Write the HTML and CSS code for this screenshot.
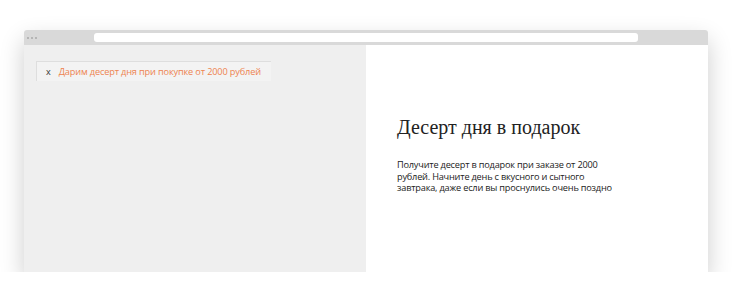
FILE: index.html
```html
<!DOCTYPE html>
<html lang="ru">
<head>
    <meta charset="UTF-8">
    <title>Десерт дня в подарок</title>
    <link rel="stylesheet" href="styles.css">
</head>
<body>
    <div class="browser">
        <div class="titlebar">
            <div class="dots"><span></span><span></span><span></span></div>
            <div class="address"></div>
        </div>
        <div class="content">
            <div class="left">
                <div class="notice">
                    <span class="close">x</span>
                    <span class="notice-text">Дарим десерт дня при покупке от 2000 рублей</span>
                </div>
            </div>
            <div class="right">
                <h2>Десерт дня в подарок</h2>
                <p>Получите десерт в подарок при заказе от 2000 рублей. Начните день с вкусного и сытного завтрака, даже если вы проснулись очень поздно</p>
            </div>
        </div>
    </div>
</body>
</html>
```

FILE: styles.css
```css
body {
    margin: 0;
    background: #fff;
    font-family: "Open Sans", "Noto Sans", sans-serif;
}
.browser {
    margin: 30px 0 0 24px;
    width: 684px;
    border-radius: 3px 3px 0 0;
    overflow: hidden;
    box-shadow: 0 10px 24px rgba(0, 0, 0, 0.2);
}
.titlebar {
    height: 15px;
    background: #d9d9d9;
    display: flex;
    align-items: center;
}
.dots {
    width: 70px;
    display: flex;
    gap: 2px;
    padding-left: 3px;
}
.dots span {
    width: 2px;
    height: 2px;
    border-radius: 50%;
    background: #a9a9a9;
}
.address {
    width: 544px;
    height: 9px;
    margin-top: -1px;
    margin-left: -3px;
    background: #fff;
    border-radius: 3px;
}
.content {
    display: flex;
    height: 227px;
}
.left {
    width: 342px;
    background: #efefef;
    padding: 16px 0 0 12px;
    box-sizing: border-box;
}
.notice {
    width: 235px;
    height: 20px;
    box-sizing: border-box;
    background: #f3f3f3;
    border-top: 1px solid #dedede;
    border-left: 1px solid #dedede;
    display: flex;
    align-items: center;
    font-size: 9.2px;
}
.close {
    color: #333;
    margin: 0 8px 0 9px;
    font-size: 9px;
}
.notice-text {
    color: #ee8350;
    letter-spacing: -0.15px;
}
.right {
    flex: 1;
    background: #fff;
    padding: 71px 0 0 31px;
}
h2 {
    margin: 0;
    font-family: "Liberation Serif", "DejaVu Serif", serif;
    font-weight: normal;
    font-size: 20px;
    color: #222;
}
p {
    margin: 20px 0 0;
    width: 220px;
    font-size: 9.2px;
    line-height: 11.6px;
    color: #222;
    letter-spacing: -0.2px;
}
```
